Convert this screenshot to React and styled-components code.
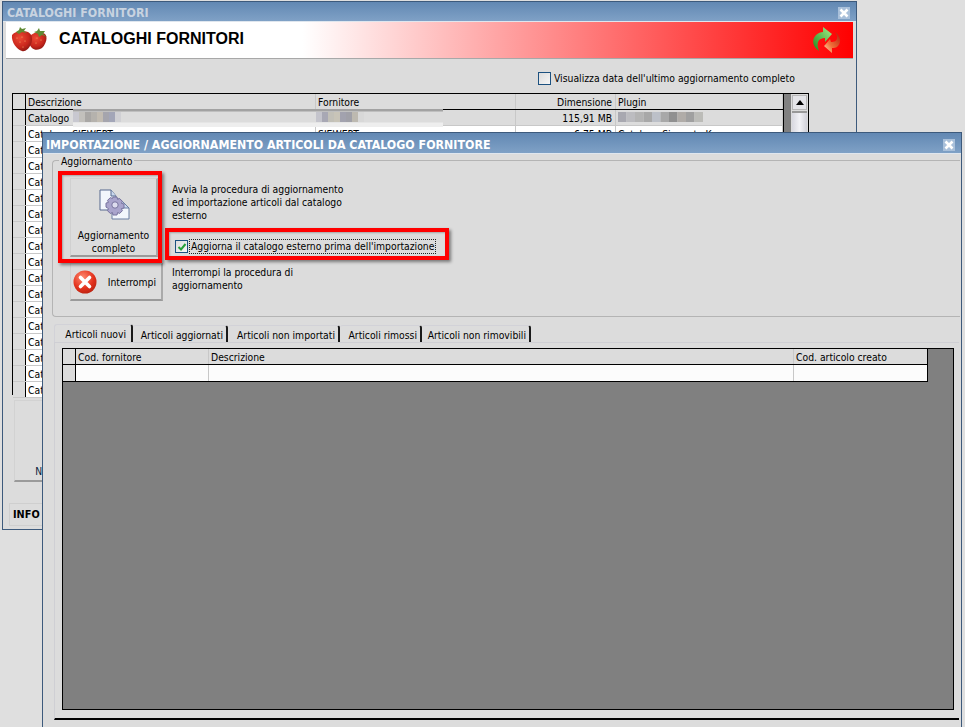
import React from 'react';
import styled, { createGlobalStyle } from 'styled-components';

const Global = createGlobalStyle`
  html, body { margin: 0; padding: 0; background: #dfdfdf; }
  * { box-sizing: border-box; }
  body { font-family: "DejaVu Sans", "Liberation Sans", sans-serif; font-stretch: condensed; font-size: 10.3px; color: #000; }
`;

const Desktop = styled.div`
  position: relative;
  width: 965px;
  height: 727px;
  overflow: hidden;
  background: #dfdfdf;
`;

const Win = styled.section`
  position: absolute;
  left: ${p => p.$left}px;
  top: ${p => p.$top}px;
  width: ${p => p.$width}px;
  height: ${p => p.$height}px;
  border: 1px solid #3d5a7c;
  background: #dcdcdc;
  display: flex;
  flex-direction: column;
`;

const TitleBar = styled.header`
  flex: none;
  height: ${p => p.$h}px;
  display: flex;
  align-items: center;
  justify-content: space-between;
  padding: 3px ${p => p.$pr}px 0 ${p => p.$pl}px;
  background: linear-gradient(#6288b3, #7fa1c6);
  border-bottom: 1px solid #dfe6ee;
  color: ${p => p.$active ? '#ffffff' : '#c8d3e0'};
  font-weight: 700;
  font-size: 12.3px;
  white-space: nowrap;
`;

const Banner = styled.div`
  flex: none;
  height: 37px;
  margin: 0 3px;
  display: flex;
  align-items: center;
  padding: 0 10px 0 5px;
  background: linear-gradient(to right, #fff 35%, #f00 100%);
  border-bottom: 1px solid #a8a8a8;
`;

const BannerTitle = styled.h1`
  flex: 1;
  margin: 0 0 2px 10px;
  font: 700 16px "Liberation Sans", Arial, sans-serif;
  color: #000;
`;

const OptionRow = styled.div`
  flex: none;
  height: 34px;
  padding: 12px 0 0 535px;
  display: flex;
  align-items: flex-start;
  gap: 3px;
  line-height: 14px;
`;

const CheckBox = styled.span`
  flex: none;
  width: 13px;
  height: 13px;
  margin-top: ${p => p.$mt || 0}px;
  display: flex;
  align-items: center;
  justify-content: center;
  border: 1px solid #1c5180;
  background: linear-gradient(135deg, #dcdcdc, #f6f6f6);
`;

const TableWrap = styled.div`
  position: relative;
  flex: none;
  width: 797px;
  height: 302px;
  margin-left: 9px;
  border: 1px solid #000;
  display: flex;
  background: #fff;
`;

const Cols = styled.div`
  flex: none;
  width: ${p => p.$width}px;
`;

const GridRow = styled.div`
  display: grid;
  grid-template-columns: ${p => p.$cols};
  height: ${p => p.$h || 16}px;
  background: ${p => p.$bg || '#fff'};
  border-bottom: 1px solid ${p => p.$line || '#c8c8c8'};
`;

const Cell = styled.div`
  display: flex;
  align-items: center;
  justify-content: ${p => p.$right ? 'flex-end' : 'flex-start'};
  padding: 0 ${p => p.$right ? 3 : 2}px 0 2px;
  border-right: 1px solid ${p => p.$line || '#c8c8c8'};
  white-space: nowrap;
  overflow: hidden;
  gap: 1px;
`;

const Indicator = styled.div`
  background: #dcdcdc;
  border-right: 1px solid #000;
`;

const Gutter = styled.div`
  flex: none;
  width: 8px;
  background: #808080;
  border-left: 1px solid #000;
`;

const ScrollBar = styled.div`
  flex: 1;
  display: flex;
  flex-direction: column;
  padding: 1px;
  background: #dcdcdc;
`;

const ScrollUp = styled.div`
  height: 15px;
  display: flex;
  align-items: center;
  justify-content: center;
  background: #e4e4e8;
  border: 1px solid #b8b8b8;
`;

const ScrollThumb = styled.div`
  flex: 1;
  margin-top: 1px;
  background: linear-gradient(to right, #d8d8e0, #f2f2f6, #d0d0d8);
  border-top: 2px solid #999;
`;

const BlurBand = styled.div`
  position: absolute;
  left: 60px;
  top: 15px;
  width: 370px;
  height: 18px;
  background: linear-gradient(#a2a2a2 0, #a2a2a2 2px, #dcdcdc 3px, #dcdcdc 13px, #eeeeee 14px);
`;

const BlurSlot = styled.div`
  position: absolute;
  left: ${p => p.$x}px;
  top: 18px;
`;

const BigAction = styled.div`
  flex: none;
  width: 72px;
  height: 82px;
  margin: 5px 0 0 11px;
  padding-bottom: 3px;
  display: flex;
  align-items: flex-end;
  justify-content: center;
  background: #dcdcdc;
  border: 1px solid #d2d2d2;
  border-bottom: 2px solid #9a9a9a;
  color: #0a1a3a;
`;

const InfoBar = styled.div`
  flex: none;
  height: 23px;
  margin: 21px 0 0 6px;
  padding-left: 3px;
  display: flex;
  align-items: center;
  border: 1px solid #cfcfcf;
  font-weight: 700;
  font-size: 10.8px;
`;

const GroupBox = styled.div`
  position: relative;
  flex: none;
  width: 908px;
  height: 157px;
  margin: 6px 0 0 9px;
  padding: 17px 0 0 17px;
  display: flex;
  gap: 9px;
  border: 1px solid #b4b4b4;
  border-right: none;
  border-radius: 4px 0 0 4px;
`;

const Legend = styled.span`
  position: absolute;
  left: 6px;
  top: -6px;
  padding: 0 2px;
  background: #dcdcdc;
  line-height: 13px;
`;

const ButtonCol = styled.div`
  flex: none;
  width: 93px;
  display: flex;
  flex-direction: column;
  align-items: flex-start;
  gap: 6px;
`;

const Marked = styled.div`
  position: relative;
`;

const RedBox = styled.div`
  position: absolute;
  left: ${p => p.$l}px;
  top: ${p => p.$t}px;
  right: ${p => p.$r}px;
  bottom: ${p => p.$b}px;
  border: 4px solid #f00;
  box-shadow: 2px 2px 3px rgba(0, 0, 0, .45), inset 1px 1px 2px rgba(0, 0, 0, .25);
  pointer-events: none;
  z-index: 2;
`;

const BigButton = styled.button`
  width: 88px;
  height: 79px;
  padding: 10px 0 0;
  display: flex;
  flex-direction: column;
  align-items: center;
  gap: 9px;
  font: inherit;
  line-height: 13px;
  color: #000;
  background: #dcdcdc;
  border: 1px solid #d0d0d0;
  border-bottom: 2px solid #9a9a9a;
  border-right: 2px solid #aaa;
`;

const IconNudge = styled.span`
  display: block;
  height: 31px;
  margin-left: 3px;
`;

const StopButton = styled.button`
  width: 93px;
  height: 38px;
  padding: 0 5px 0 2px;
  display: flex;
  align-items: center;
  justify-content: space-between;
  font: inherit;
  color: #000;
  background: #dcdcdc;
  border: 1px solid #d0d0d0;
  border-bottom: 2px solid #9a9a9a;
  border-right: 2px solid #aaa;
`;

const TextCol = styled.div`
  display: flex;
  flex-direction: column;
  padding-top: 5px;
`;

const Para = styled.p`
  margin: ${p => p.$mt || 0}px 0 0;
  line-height: 13px;
`;

const CheckRow = styled.label`
  display: flex;
  align-items: center;
  gap: 1px;
  margin: 17px 0 0 3px;
  height: 15px;
`;

const Focused = styled.span`
  height: 15px;
  padding: 0 1px;
  line-height: 13px;
  border: 1px dotted #222;
  white-space: nowrap;
`;

const TabStrip = styled.nav`
  flex: none;
  display: flex;
  height: 19px;
  margin: 7px 0 0 11px;
  width: 905px;
  border-bottom: 1px solid #cfcfd4;
`;

const Tab = styled.div`
  flex: none;
  width: ${p => p.$w}px;
  display: flex;
  align-items: center;
  justify-content: flex-end;
  white-space: nowrap;
  border-top: 1px solid #d2d2d8;
  border-left: ${p => p.$first ? '1px solid #d2d2d8' : 'none'};
  border-right: 2px solid #1a1a1a;
  border-radius: 3px 3px 0 0;
  margin-top: ${p => p.$first ? 0 : 1}px;
  padding: 1px ${p => p.$first ? 5 : 3}px 0 0;
`;

const TabPanel = styled.div`
  flex: none;
  width: 905px;
  margin-left: 11px;
  padding: 5px 0 8px 7px;
  border-left: 1px solid #cfcfd4;
  border-bottom: 2px solid #000;
`;

const DataArea = styled.div`
  width: 892px;
  height: 362px;
  background: #808080;
  border: 1px solid #000;
`;

const DataGrid = styled.div`
  width: 865px;
  border-right: 1px solid #000;
`;

const WinClose = () => (
  <svg width="12" height="12" viewBox="0 0 12 12">
    <rect width="12" height="12" fill="#a9c0da" />
    <path d="M2.5 2.5l7 7M9.5 2.5l-7 7" stroke="#fff" strokeWidth="2.6" />
  </svg>
);

const Mosaic = ({ cells, size = 6, h = 10 }) => (
  <svg width={cells.length * size} height={h} style={{ display: 'block' }}>
    {cells.map((c, i) => <rect key={i} x={i * size} width={size} height={h} fill={c} />)}
  </svg>
);

const Strawberries = () => (
  <svg width="38" height="26" viewBox="0 0 38 26">
    <defs>
      <radialGradient id="berry" cx=".4" cy=".35" r=".75">
        <stop offset="0" stopColor="#ee4a35" />
        <stop offset=".6" stopColor="#c8261c" />
        <stop offset="1" stopColor="#7d1410" />
      </radialGradient>
    </defs>
    <path d="M20 8c3-3 10-4 14-1 3 3 1 9-2 13-3 3-8 4-11 1-3-3-5-9-1-13z" fill="url(#berry)" />
    <path d="M1 8c3-4 11-5 16-3 4 2 5 7 3 12-2 5-6 8-9 7-5-1-11-9-10-16z" fill="url(#berry)" />
    <path d="M5 5l3-2 1-3 2 2 4-1-2 3 3 2-5-1-3 2zM23 5l3-1 2-3 1 3 5 0-2 3 4 3-5-2-3 2-1-3z" fill="#5f8a34" />
    <g fill="#f8c77a">
      <circle cx="6" cy="11" r=".5" /><circle cx="11" cy="10" r=".5" /><circle cx="9" cy="15" r=".5" />
      <circle cx="14" cy="14" r=".5" /><circle cx="12" cy="20" r=".5" /><circle cx="26" cy="11" r=".5" />
      <circle cx="30" cy="13" r=".5" /><circle cx="25" cy="16" r=".5" />
    </g>
  </svg>
);

const SyncArrows = () => (
  <svg width="32" height="28" viewBox="0 0 32 28">
    <defs>
      <linearGradient id="ga" x1="0" y1="1" x2="1" y2="0">
        <stop offset="0" stopColor="#1d8a1d" />
        <stop offset="1" stopColor="#a6f08a" />
      </linearGradient>
      <linearGradient id="ra" x1="1" y1="0" x2="0" y2="1">
        <stop offset="0" stopColor="#b51a0a" />
        <stop offset=".6" stopColor="#f0703a" />
        <stop offset="1" stopColor="#ffe0b0" />
      </linearGradient>
    </defs>
    <path d="M8 25C2 21 0 14 5 9c2-2 5-3 7-3V1l9 7-7 8v-4c-3 0-6 1-7 4-1 3 0 6 1 9z" fill="url(#ga)" />
    <path d="M24 6c5 3 7 10 3 14-2 2-4 2-6 2v5l-8-7 1-1 5-6 1 3c3 0 6-1 6-4 1-2-1-4-2-6z" fill="url(#ra)" />
  </svg>
);

const DocGear = () => (
  <svg width="32" height="31" viewBox="0 0 32 31">
    <path d="M1 1h11l5 6v14H1z" fill="#f2f6fc" stroke="#56698e" />
    <path d="M12 1v6h5" fill="#c9d8ee" stroke="#56698e" />
    <path d="M13 10h8l9 9v11H13z" fill="#f2f6fc" stroke="#6b7ea2" />
    <path d="M21 10l9 9h-9z" fill="#c9d8ee" stroke="#6b7ea2" />
    <path
      d="M14 8h4l.6 2.4 2-.9 2.8 2.8-1 2 2.6.7v4l-2.6.6 1 2.1-2.8 2.8-2-1-.6 2.5h-4l-.6-2.5-2.1 1-2.8-2.8 1-2.1L7 18.100v-4l2.500-.7-1-2 2.800-2.800 2.100.9z"
      fill="#a9a4cc"
      stroke="#77739e"
    />
    <circle cx="16" cy="16" r="3.200" fill="#dcdcee" stroke="#77739e" />
  </svg>
);

const StopIcon = () => (
  <svg width="24" height="24" viewBox="0 0 24 24">
    <defs>
      <radialGradient id="rx" cx=".4" cy=".3" r=".8">
        <stop offset="0" stopColor="#ff8a70" />
        <stop offset=".6" stopColor="#e3311c" />
        <stop offset="1" stopColor="#b0200f" />
      </radialGradient>
    </defs>
    <circle cx="12" cy="12" r="11.500" fill="url(#rx)" />
    <path d="M7.500 7.500l9 9M16.500 7.500l-9 9" stroke="#fff" strokeWidth="3.600" strokeLinecap="round" />
  </svg>
);

const Tick = () => (
  <svg width="10" height="10" viewBox="0 0 10 10">
    <path d="M1.500 5l2.500 2.500L8.500 2" fill="none" stroke="#26a03a" strokeWidth="2" />
  </svg>
);

const ArrowUp = () => (
  <svg width="8" height="5" viewBox="0 0 8 5">
    <path d="M4 0l4 5H0z" fill="#000" />
  </svg>
);

const backCols = '13px 290px 200px 100px 167px';
const frontCols = '13px 133px 585px 134px';

const backRows = Array.from({ length: 17 }, (_, i) => i);

const blurA = ['#c8c8d0', '#c2c0bc', '#a9a7a5', '#b5b2ad', '#c2bcb2', '#a5a5ad', '#a3a6b8', '#d0d0d4'];
const blurB = ['#c4c4cc', '#a8a8b4', '#c2c0b8', '#c8c4b8', '#a2a2ae', '#a0a0a8', '#bdb9b0', '#d8d8d8'];
const blurC = ['#a8a8b0', '#bcbcc0', '#b4b4b4', '#a8a8a8', '#bcc0c8', '#a8a8a8', '#909090', '#b0aca8', '#a0a0a0', '#bcbcb8'];

export default function App() {
  return (
    <Desktop>
      <Global />
      <Win $left={2} $top={1} $width={855} $height={529}>
        <TitleBar $h={20} $pl={4} $pr={6}>
          <span>CATALOGHI FORNITORI</span>
          <WinClose />
        </TitleBar>
        <Banner>
          <Strawberries />
          <BannerTitle>CATALOGHI FORNITORI</BannerTitle>
          <SyncArrows />
        </Banner>
        <OptionRow>
          <CheckBox $mt={1} />
          <span>Visualizza data dell'ultimo aggiornamento completo</span>
        </OptionRow>
        <TableWrap>
          <Cols $width={770}>
            <GridRow $cols={backCols} $bg="#dcdcdc" $line="#000">
              <Indicator />
              <Cell>Descrizione</Cell>
              <Cell>Fornitore</Cell>
              <Cell $right>Dimensione</Cell>
              <Cell>Plugin</Cell>
            </GridRow>
            <GridRow $cols={backCols} $bg="#dcdcdc">
              <Indicator />
              <Cell>Catalogo</Cell>
              <Cell />
              <Cell $right>115,91 MB</Cell>
              <Cell />
            </GridRow>
            {backRows.map(i => (
              <GridRow key={i} $cols={backCols}>
                <Indicator />
                <Cell>{i === 0 ? 'Catalogo SIEWERT' : 'Catalogo'}</Cell>
                <Cell>{i === 0 ? 'SIEWERT' : ''}</Cell>
                <Cell $right>{i === 0 ? '6,75 MB' : ''}</Cell>
                <Cell>{i === 0 ? 'Catalogo Siewert xK' : ''}</Cell>
              </GridRow>
            ))}
          </Cols>
          <Gutter />
          <ScrollBar>
            <ScrollUp><ArrowUp /></ScrollUp>
            <ScrollThumb />
          </ScrollBar>
          <BlurBand />
          <BlurSlot $x={60}><Mosaic cells={blurA} /></BlurSlot>
          <BlurSlot $x={303}><Mosaic cells={blurB} /></BlurSlot>
          <BlurSlot $x={605}><Mosaic cells={blurC} size={8.500} /></BlurSlot>
        </TableWrap>
        <BigAction>Nuovo</BigAction>
        <InfoBar>INFO</InfoBar>
      </Win>

      <Win $left={42} $top={132} $width={920} $height={610}>
        <TitleBar $h={21} $active $pl={3} $pr={6}>
          <span>IMPORTAZIONE / AGGIORNAMENTO ARTICOLI DA CATALOGO FORNITORE</span>
          <WinClose />
        </TitleBar>
        <GroupBox>
          <Legend>Aggiornamento</Legend>
          <ButtonCol>
            <Marked>
              <BigButton>
                <IconNudge><DocGear /></IconNudge>
                <span>Aggiornamento<br />completo</span>
              </BigButton>
              <RedBox $l={-12} $t={-7} $r={-4} $b={-6} />
            </Marked>
            <StopButton>
              <StopIcon />
              <span>Interrompi</span>
            </StopButton>
          </ButtonCol>
          <TextCol>
            <Para>Avvia la procedura di aggiornamento<br />ed importazione articoli dal catalogo<br />esterno</Para>
            <Marked>
              <CheckRow>
                <CheckBox><Tick /></CheckBox>
                <Focused>Aggiorna il catalogo esterno prima dell'importazione</Focused>
              </CheckRow>
              <RedBox $l={-7} $t={6} $r={-13} $b={-6} />
            </Marked>
            <Para $mt={12}>Interrompi la procedura di<br />aggiornamento</Para>
          </TextCol>
        </GroupBox>
        <TabStrip>
          <Tab $first $w={79}>Articoli nuovi</Tab>
          <Tab $w={95}>Articoli aggiornati</Tab>
          <Tab $w={112}>Articoli non importati</Tab>
          <Tab $w={82}>Articoli rimossi</Tab>
          <Tab $w={109}>Articoli non rimovibili</Tab>
        </TabStrip>
        <TabPanel>
          <DataArea>
            <DataGrid>
              <GridRow $cols={frontCols} $bg="#dcdcdc" $line="#000">
                <Indicator />
                <Cell>Cod. fornitore</Cell>
                <Cell>Descrizione</Cell>
                <Cell $line="transparent">Cod. articolo creato</Cell>
              </GridRow>
              <GridRow $cols={frontCols} $h={17} $bg="#fcfcfc" $line="#000">
                <Indicator />
                <Cell />
                <Cell />
                <Cell $line="transparent" />
              </GridRow>
            </DataGrid>
          </DataArea>
        </TabPanel>
      </Win>
    </Desktop>
  );
}
